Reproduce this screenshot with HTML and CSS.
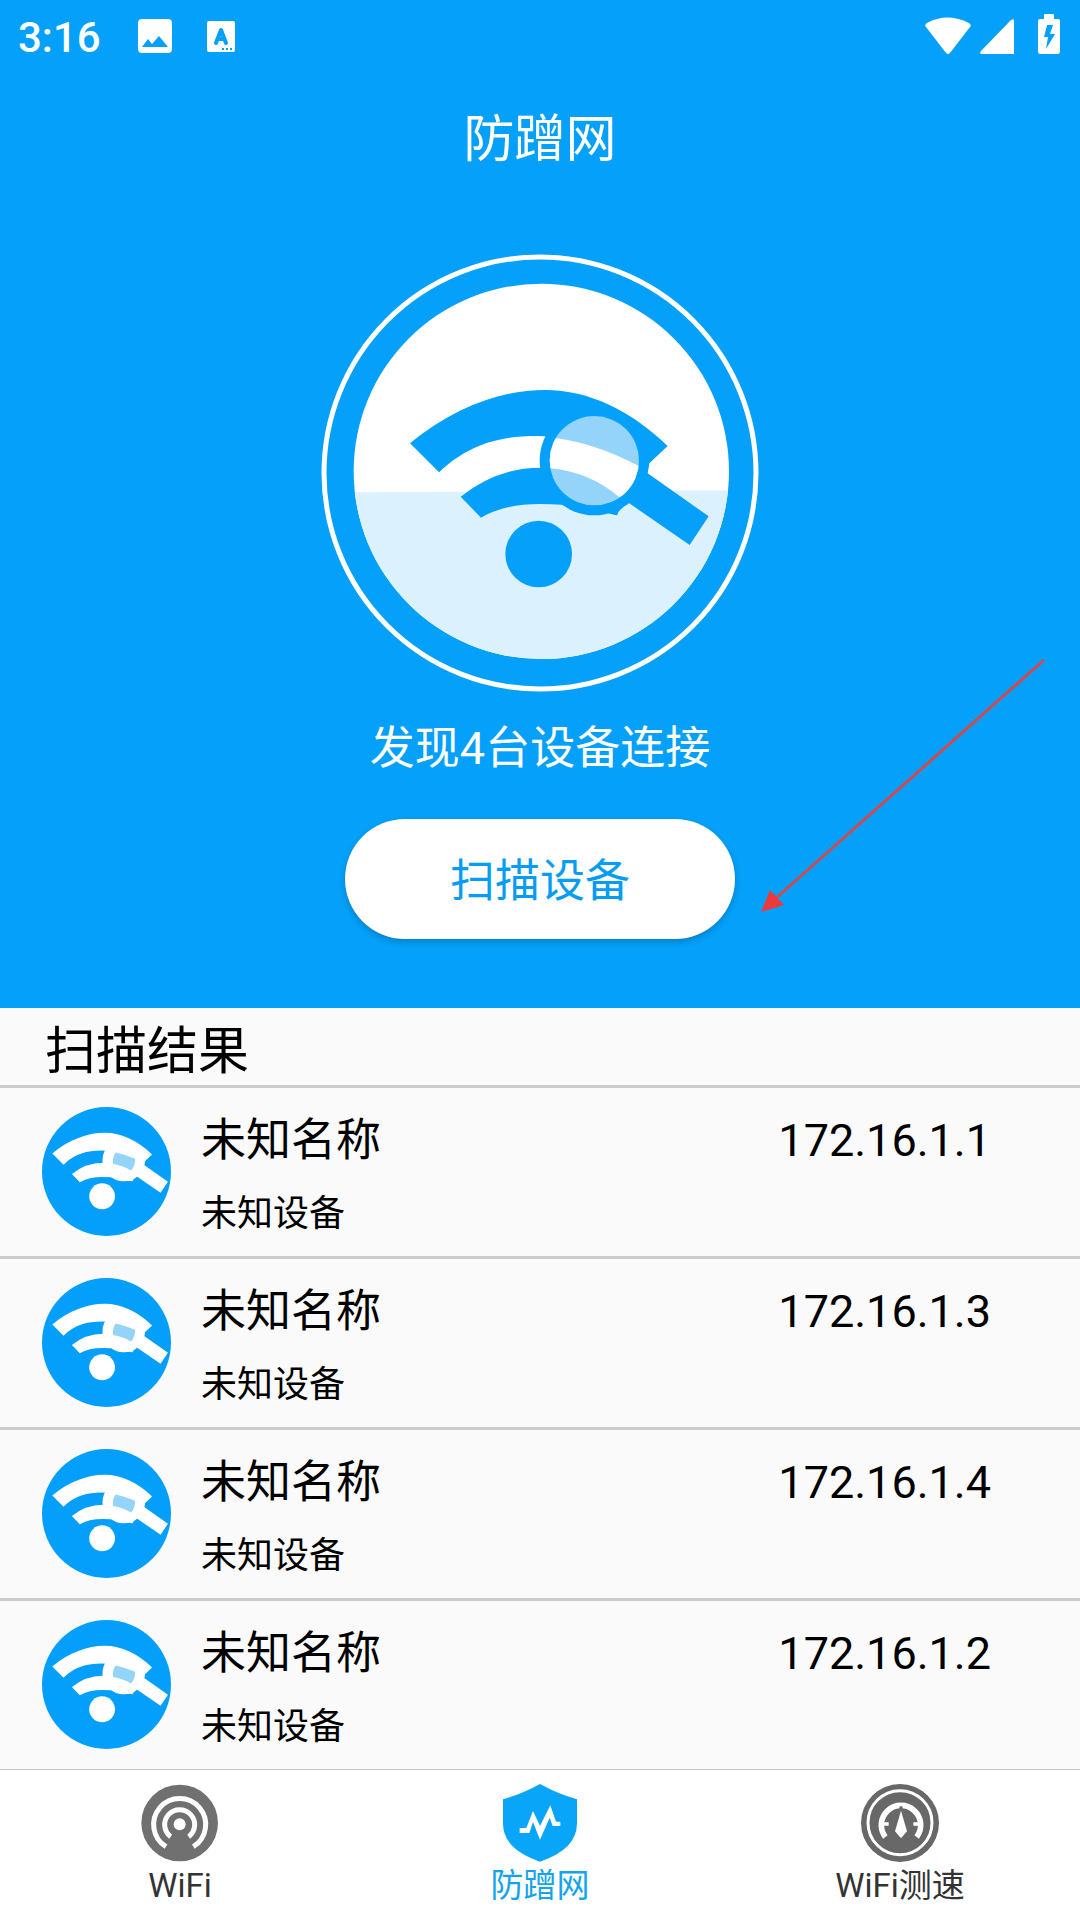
FILE: index.html
```html
<!DOCTYPE html>
<html lang="zh-CN">
<head>
<meta charset="utf-8">
<meta name="viewport" content="width=device-width, initial-scale=1">
<title>防蹭网</title>
<link rel="stylesheet" href="styles.css">
</head>
<body>
<svg class="defs" aria-hidden="true">
  <defs>
    <!-- WiFi waves with the frame and handle of the magnifier -->
    <g id="wifi-search">
      <path d="M299 610C430 503 570 450 705 450C835 450 962 512 1072 618L1017 670L985 678C900 630 800 590 680 588C570 588 475 612 386 697Z"/>
      <path d="M451 770Q560 683 690 683Q830 683 932 768L920 826L895 820L755 794Q720 792 690 792Q580 792 512 833Z"/>
      <circle cx="852" cy="662" r="164"/>
      <path d="M1017 670L1011 699L1195 829L1138 915L957 790L900 780L960 640Z"/>
      <path d="M850 790L957 790Q925 806 920 826L895 820Z"/>
      <circle cx="685" cy="942" r="100"/>
    </g>
    <g id="device-icon">
      <circle cx="719" cy="750" r="500" fill="#049ffb"/>
      <use href="#wifi-search" fill="#fff"/>
      <path d="M790 603Q860 618 941 652Q942 706 910 742Q846 704 770 692Q764 640 790 603Z" fill="#94d4fa"/>
    </g>
    <clipPath id="disc"><circle cx="693" cy="694" r="563"/></clipPath>
    <clipPath id="lens"><circle cx="852" cy="662" r="134"/></clipPath>
  </defs>
</svg>

<header class="hero">
  <div class="status">
    <span class="time">3:16</span>
    <svg class="status-picture" viewBox="0 0 34 34" aria-hidden="true"><path fill="#fff" fill-rule="evenodd" d="M4 0H30Q34 0 34 4V30Q34 34 30 34H4Q0 34 0 30V4Q0 0 4 0ZM4 28H30L21 17L14 25L10 20Z"/></svg>
    <svg class="status-letter" viewBox="0 0 28 31" aria-hidden="true"><rect width="28" height="31" rx="2" fill="#fff"/><path d="M9 22L14 9L19 22M11 18H17" fill="none" stroke="#04a0f9" stroke-width="4" stroke-linecap="round" stroke-linejoin="round"/><path d="M15 28h2M19 28h2M23 28h2" stroke="#04a0f9" stroke-width="2"/></svg>
    <div class="signals">
      <svg class="signal-wifi" viewBox="0 0 46 37" aria-hidden="true"><path fill="#fff" d="M1 10Q-1 8 2 6Q22 -5 44 6Q47 8 45 10L25 36Q23 38 21 36Z"/></svg>
      <svg class="signal-cell" viewBox="0 0 34 35" aria-hidden="true"><path fill="#fff" d="M1 32L31 1Q34 -1 34 2V35H2Q-1 35 1 32Z"/></svg>
      <svg class="signal-battery" viewBox="0 0 22 40" aria-hidden="true"><path fill="#fff" fill-rule="evenodd" d="M6 1Q6 0 7 0H15Q16 0 16 1V5H20Q22 5 22 7V37Q22 40 20 40H2Q0 40 0 37V7Q0 5 2 5H6ZM9 11L6 23H10L8 35L17 20H12L15 11Z"/></svg>
    </div>
  </div>
  <h1>防蹭网</h1>
  <svg class="radar" viewBox="29 39 1320 1320" aria-hidden="true">
    <circle cx="689" cy="699" r="648" fill="none" stroke="#fff" stroke-width="15"/>
    <g clip-path="url(#disc)">
      <path fill="#fff" d="M120 120H1270V1270H120Z"/>
      <path fill="#dcf1fe" d="M120 757L1270 751V1270H120Z"/>
    </g>
    <use href="#wifi-search" fill="#04a0f9"/>
    <g clip-path="url(#lens)">
      <path fill="#94d4fa" d="M700 500H1000V810H700Z"/>
      <path fill="#fff" d="M700 590Q850 602 1000 686V820L925 770Q830 690 700 683Z"/>
    </g>
  </svg>
  <p class="found">发现4台设备连接</p>
  <button class="scan" type="button">扫描设备</button>
  <svg class="pointer" viewBox="0 0 290 260" aria-hidden="true"><path d="M287 4L18 243" stroke="#d04a50" stroke-width="3"/><path fill="#ec3a3a" d="M4 256L13 234L27 249Z"/></svg>
</header>

<main class="results">
  <h2>扫描结果</h2>
  <ul>
    <li>
      <svg class="device" viewBox="219 250 1000 1000" aria-hidden="true"><use href="#device-icon"/></svg>
      <div class="info"><span class="name">未知名称</span><span class="kind">未知设备</span></div>
      <span class="ip">172.16.1.1</span>
    </li>
    <li>
      <svg class="device" viewBox="219 250 1000 1000" aria-hidden="true"><use href="#device-icon"/></svg>
      <div class="info"><span class="name">未知名称</span><span class="kind">未知设备</span></div>
      <span class="ip">172.16.1.3</span>
    </li>
    <li>
      <svg class="device" viewBox="219 250 1000 1000" aria-hidden="true"><use href="#device-icon"/></svg>
      <div class="info"><span class="name">未知名称</span><span class="kind">未知设备</span></div>
      <span class="ip">172.16.1.4</span>
    </li>
    <li>
      <svg class="device" viewBox="219 250 1000 1000" aria-hidden="true"><use href="#device-icon"/></svg>
      <div class="info"><span class="name">未知名称</span><span class="kind">未知设备</span></div>
      <span class="ip">172.16.1.2</span>
    </li>
  </ul>
</main>

<nav class="tabs">
  <a href="#wifi">
    <svg viewBox="120 69 240 240" aria-hidden="true">
      <circle cx="239" cy="189" r="115" fill="#707070"/>
      <g fill="none" stroke="#fff" stroke-width="15"><path d="M198 260A78 78 0 1 1 280 260"/><path d="M212 230A45 45 0 1 1 266 230"/></g>
      <circle cx="239" cy="193" r="18" fill="#fff"/>
    </svg>
    <span>WiFi</span>
  </a>
  <a href="#guard" class="active" aria-current="page">
    <svg viewBox="120 69 240 240" aria-hidden="true">
      <path fill="#09a5f8" d="M240 72Q292 101 351 118V190Q351 268 240 305Q129 268 129 190V118Q188 101 240 72Z"/>
      <path fill="#fff" d="M179 204H199L219 153L240 198L271 136L288 185H301V198H278L269 173L240 239L219 186L208 219H179Z"/>
    </svg>
    <span>防蹭网</span>
  </a>
  <a href="#speed">
    <svg viewBox="120 69 240 240" aria-hidden="true">
      <circle cx="240" cy="189" r="117" fill="#686868"/>
      <circle cx="240" cy="188" r="96" fill="none" stroke="#fff" stroke-width="9"/>
      <path d="M196 231A59 59 0 1 1 290 231" fill="none" stroke="#fff" stroke-width="17"/>
      <path d="M190 192H206M280 192H296" stroke="#fff" stroke-width="10"/>
      <path d="M243 139V158" stroke="#686868" stroke-width="9"/>
      <path fill="#fff" d="M243 152L261 214L243 235L225 214Z"/>
    </svg>
    <span>WiFi测速</span>
  </a>
</nav>
</body>
</html>
```
FILE: styles.css
```css
* {
  box-sizing: border-box;
  margin: 0;
  padding: 0;
}

body {
  display: flex;
  flex-direction: column;
  min-height: 100vh;
  background: #fafafa;
  color: #000;
  font-family: Roboto, "Noto Sans CJK SC", sans-serif;
}

svg {
  display: block;
  flex: none;
}

.defs {
  position: absolute;
  width: 0;
  height: 0;
}

.hero {
  position: relative;
  display: flex;
  flex-direction: column;
  align-items: center;
  padding-bottom: 69px;
  background: #04a0f9;
  color: #fff;
}

.status {
  display: flex;
  align-items: center;
  width: 100%;
  height: 72px;
  padding: 0 20px 0 18px;
}

.time {
  padding-top: 3px;
  font-size: 42px;
  font-weight: 500;
  line-height: 72px;
}

.status-picture {
  width: 34px;
  height: 34px;
  margin-left: 37px;
}

.status-letter {
  width: 28px;
  height: 31px;
  margin-left: 35px;
}

.signals {
  display: flex;
  align-items: flex-end;
  height: 36px;
  margin-left: auto;
}

.signal-wifi {
  width: 46px;
  height: 37px;
}

.signal-cell {
  width: 34px;
  height: 35px;
  margin-left: 9px;
}

.signal-battery {
  width: 22px;
  height: 40px;
  margin-left: 24px;
}

h1 {
  margin-top: 32px;
  font-size: 51px;
  font-weight: 400;
  line-height: 72px;
}

.radar {
  width: 440px;
  height: 440px;
  margin-top: 77px;
}

.found {
  margin-top: 23px;
  font-size: 45px;
  line-height: 66px;
}

.scan {
  width: 390px;
  height: 120px;
  margin-top: 37px;
  padding-bottom: 4px;
  border: 0;
  border-radius: 60px;
  background: #fff;
  box-shadow: 0 3px 6px rgba(0, 0, 0, 0.2);
  color: #059cf5;
  font: inherit;
  font-size: 45px;
}

.pointer {
  position: absolute;
  right: 33px;
  bottom: 92px;
  width: 290px;
  height: 260px;
}

.results {
  flex: 1;
}

h2 {
  padding: 10px 45px 0;
  border-bottom: 3px solid #ccc;
  font-size: 51px;
  font-weight: 400;
  line-height: 67px;
}

ul {
  list-style: none;
}

li {
  display: flex;
  align-items: flex-start;
  padding: 20px 89px 15px 42px;
  border-bottom: 3px solid #ccc;
}

li:last-child {
  border-bottom: 0;
}

.device {
  width: 129px;
  height: 129px;
  margin-top: -1px;
}

.info {
  display: flex;
  flex: 1;
  flex-direction: column;
  gap: 13px;
  margin-left: 30px;
}

.name,
.ip {
  font-size: 45px;
  line-height: 66px;
}

.kind {
  font-size: 36px;
  line-height: 54px;
}

.tabs {
  display: flex;
  padding: 13px 0 14px;
  border-top: 1px solid #c4c4c4;
  background: #fff;
}

.tabs a {
  display: flex;
  flex: 1;
  flex-direction: column;
  align-items: center;
  gap: 3px;
  color: #333;
  font-size: 33px;
  line-height: 40px;
  text-decoration: none;
}

.tabs svg {
  width: 80px;
  height: 80px;
}

.tabs .active {
  color: #14a4ec;
}
```
